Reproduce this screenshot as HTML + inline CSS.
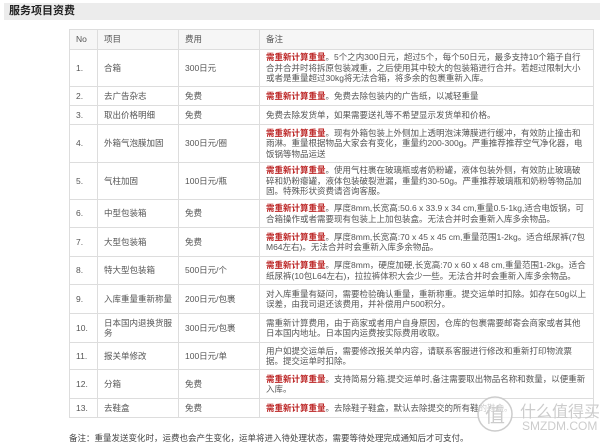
<!DOCTYPE html>
<html><head><meta charset="utf-8"><style>
body{margin:0;width:600px;height:443px;background:#fff;font-family:"Liberation Sans","Noto Sans CJK SC",sans-serif;color:#555;position:relative;overflow:hidden}
.hd{position:absolute;left:4px;top:3px;width:596px;height:17px;background:#ececec;font-size:11px;font-weight:bold;color:#222;line-height:17px;padding-left:5px;box-sizing:border-box}
table{position:absolute;left:69px;top:29px;width:525px;border-collapse:collapse;font-size:8.5px;table-layout:fixed}
td{border:1px solid #ddd;padding:0 6px;line-height:10.5px;vertical-align:middle}
tr.h td{background:#f6f6f6}
.r{color:#b22;font-weight:bold}
.note{position:absolute;left:69px;top:432px;font-size:8.5px;color:#444}
.logo{position:absolute;left:476px;top:395px;color:#ccc;font-size:16px}
</style></head><body>
<div class="hd">服务项目资费</div>
<table>
<col style="width:28px"><col style="width:81px"><col style="width:81px"><col>
<tr class="h" style="height:20px"><td>No</td><td>项目</td><td>费用</td><td>备注</td></tr>
<tr style="height:37px"><td>1.</td><td>合箱</td><td>300日元</td><td><span class="r">需重新计算重量</span>。5个之内300日元，超过5个，每个50日元，最多支持10个箱子自行合并合并时将拆原包装减重，之后使用其中较大的包装箱进行合并。若超过限制大小或者是重量超过30kg将无法合箱，将多余的包裹重新入库。</td></tr>
<tr style="height:19px"><td>2.</td><td>去广告杂志</td><td>免费</td><td><span class="r">需重新计算重量</span>。免费去除包装内的广告纸，以减轻重量</td></tr>
<tr style="height:19px"><td>3.</td><td>取出价格明细</td><td>免费</td><td>免费去除发货单，如果需要送礼等不希望显示发货单和价格。</td></tr>
<tr style="height:38px"><td>4.</td><td>外箱气泡膜加固</td><td>300日元/圈</td><td><span class="r">需重新计算重量</span>。现有外箱包装上外侧加上透明泡沫薄膜进行缓冲，有效防止撞击和雨淋。重量根据物品大家会有变化，重量约200-300g。严重推荐推荐空气净化器，电饭锅等物品运送</td></tr>
<tr style="height:37px"><td>5.</td><td>气柱加固</td><td>100日元/瓶</td><td><span class="r">需重新计算重量</span>。使用气柱裹在玻璃瓶或者奶粉罐，液体包装外侧，有效防止玻璃破碎和奶粉瘪罐，液体包装破裂泄漏，重量约30-50g。严重推荐玻璃瓶和奶粉等物品加固。特殊形状资费请咨询客服。</td></tr>
<tr style="height:28px"><td>6.</td><td>中型包装箱</td><td>免费</td><td><span class="r">需重新计算重量</span>。厚度8mm,长宽高:50.6 x 33.9 x 34 cm,重量0.5-1kg,适合电饭锅，可合箱操作或者需要现有包装上上加包装盒。无法合并时会重新入库多余物品。</td></tr>
<tr style="height:29px"><td>7.</td><td>大型包装箱</td><td>免费</td><td><span class="r">需重新计算重量</span>。厚度8mm,长宽高:70 x 45 x 45 cm,重量范围1-2kg。适合纸尿裤(7包M64左右)。无法合并时会重新入库多余物品。</td></tr>
<tr style="height:28px"><td>8.</td><td>特大型包装箱</td><td>500日元/个</td><td><span class="r">需重新计算重量</span>。厚度8mm，硬度加硬,长宽高:70 x 60 x 48 cm,重量范围1-2kg。适合纸尿裤(10包L64左右)，拉拉裤体积大会少一些。无法合并时会重新入库多余物品。</td></tr>
<tr style="height:29px"><td>9.</td><td>入库重量重新称量</td><td>200日元/包裹</td><td>对入库重量有疑问，需要检验确认重量，重新称重。提交运单时扣除。如存在50g以上误差，由我司退还该费用，并补偿用户500积分。</td></tr>
<tr style="height:29px"><td>10.</td><td>日本国内退换货服务</td><td>300日元/包裹</td><td>需重新计算费用，由于商家或者用户自身原因，仓库的包裹需要邮寄会商家或者其他日本国内地址。日本国内运费按实际费用收取。</td></tr>
<tr style="height:27px"><td>11.</td><td>报关单修改</td><td>100日元/单</td><td>用户如提交运单后，需要修改报关单内容，请联系客服进行修改和重新打印物流票据。提交运单时扣除。</td></tr>
<tr style="height:29px"><td>12.</td><td>分箱</td><td>免费</td><td><span class="r">需重新计算重量</span>。支持简易分箱,提交运单时,备注需要取出物品名称和数量，以便重新入库。</td></tr>
<tr style="height:19px"><td>13.</td><td>去鞋盒</td><td>免费</td><td><span class="r">需重新计算重量</span>。去除鞋子鞋盒，默认去除提交的所有鞋的鞋盒。</td></tr>
</table>
<div class="note">备注：重量发送变化时，运费也会产生变化，运单将进入待处理状态，需要等待处理完成通知后才可支付。</div>
<div class="logo"><svg width="38" height="38" style="position:absolute;left:0;top:0"><circle cx="19" cy="19" r="17" fill="rgba(255,255,255,.7)" stroke="#ccc" stroke-width="1.5"/><text x="9" y="27" font-size="20" fill="#ccc" font-family="Noto Sans CJK SC">值</text></svg><span style="position:absolute;left:44px;top:3px;white-space:nowrap">什么值得买</span><span style="position:absolute;left:46px;top:24px;font-size:12px">SMZDM.COM</span></div>
</body></html>
